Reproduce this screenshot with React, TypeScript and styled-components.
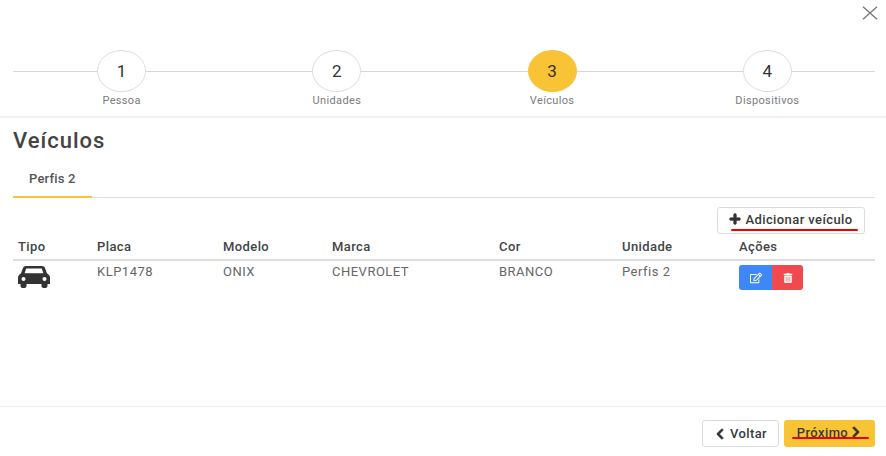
import React from 'react';
import styled, { createGlobalStyle } from 'styled-components';
import { FaChevronLeft, FaChevronRight, FaPlus, FaRegEdit, FaTrashAlt } from 'react-icons/fa';

const GlobalStyle = createGlobalStyle`
    html, body {
        margin: 0;
        padding: 0;
        background: #fff;
    }
    * {
        box-sizing: border-box;
    }
    body {
        font-family: Roboto, "Liberation Sans", sans-serif;
        color: #444;
    }
`;

const steps = [
    { n: 1, label: 'Pessoa' },
    { n: 2, label: 'Unidades' },
    { n: 3, label: 'Veículos', active: true },
    { n: 4, label: 'Dispositivos' },
];

const columns = ['Tipo', 'Placa', 'Modelo', 'Marca', 'Cor', 'Unidade', 'Ações'];

const carPath =
    'M8 0H24C25.5 0 26.5 .8 27 2L29 7.5C31 8.5 32 10 32 12V18H29.5V20C29.5 21.2 28.5 22 27.5 22H25.5C24.5 22 23.5 21.2 23.5 20V18H8.5V20C8.5 21.2 7.5 22 6.5 22H4.5C3.5 22 2.5 21.2 2.5 20V18H0V12C0 10 1 8.5 3 7.5L5 2C5.5 .8 6.5 0 8 0Z' +
    'M8.2 2.6L6.6 7.2H25.4L23.8 2.6Z' +
    'M5.5 11A2 2 0 1 0 5.5 15A2 2 0 1 0 5.5 11Z' +
    'M26.5 11A2 2 0 1 0 26.5 15A2 2 0 1 0 26.5 11Z';

export default function App() {
    return (
        <>
            <GlobalStyle />
            <Modal>
                <TopBar>
                    <CloseButton aria-label="Fechar">
                        <svg width="16" height="14" viewBox="0 0 16 14" fill="none" stroke="#777" strokeWidth="1.3">
                            <path d="M1 0.8 L15 13.2 M15 0.8 L1 13.2" />
                        </svg>
                    </CloseButton>
                </TopBar>
                <Stepper>
                    {steps.map((s) => (
                        <Step key={s.n}>
                            <Circle $active={s.active}>{s.n}</Circle>
                            <StepLabel>{s.label}</StepLabel>
                        </Step>
                    ))}
                </Stepper>
                <Content>
                    <Title>Veículos</Title>
                    <Tabs>
                        <Tab>Perfis 2</Tab>
                    </Tabs>
                    <Actions>
                        <OutlineButton>
                            <PlusIcon />
                            Adicionar veículo
                            <AddMark />
                        </OutlineButton>
                    </Actions>
                    <HeaderRow>
                        {columns.map((c) => (
                            <HeaderCell key={c}>{c}</HeaderCell>
                        ))}
                    </HeaderRow>
                    <Row>
                        <CarCell>
                            <svg width="32" height="22" viewBox="0 0 32 22" fill="#333">
                                <path fillRule="evenodd" d={carPath} />
                            </svg>
                        </CarCell>
                        <Cell>KLP1478</Cell>
                        <Cell>ONIX</Cell>
                        <Cell>CHEVROLET</Cell>
                        <Cell>BRANCO</Cell>
                        <Cell>Perfis 2</Cell>
                        <ActionCell>
                            <ButtonGroup>
                                <EditButton aria-label="Editar">
                                    <FaRegEdit size={12} />
                                </EditButton>
                                <DeleteButton aria-label="Excluir">
                                    <FaTrashAlt size={10} />
                                </DeleteButton>
                            </ButtonGroup>
                        </ActionCell>
                    </Row>
                </Content>
                <Footer>
                    <BackButton>
                        <Chevron as={FaChevronLeft} />
                        Voltar
                    </BackButton>
                    <NextButton>
                        Próximo
                        <Chevron as={FaChevronRight} />
                        <NextMark />
                    </NextButton>
                </Footer>
            </Modal>
        </>
    );
}

const Modal = styled.div`
    width: 886px;
    height: 456px;
    background: #fff;
    display: flex;
    flex-direction: column;
    overflow: hidden;
`;

const TopBar = styled.div`
    height: 50px;
    display: flex;
    justify-content: flex-end;
    padding: 6px 8px 0 0;
`;

const CloseButton = styled.div`
    width: 16px;
    height: 14px;
    display: flex;
`;

const Stepper = styled.div`
    position: relative;
    height: 68px;
    padding: 0 11px 0 14px;
    display: flex;
    border-bottom: 2px solid #f1f1f1;

    &::before {
        content: '';
        position: absolute;
        left: 13px;
        right: 11px;
        top: 21px;
        height: 1px;
        background: #d6d6d6;
    }
`;

const Step = styled.div`
    position: relative;
    flex: 1;
    display: flex;
    flex-direction: column;
    align-items: center;
`;

const Circle = styled.div<{ $active?: boolean }>`
    width: 49px;
    height: 42px;
    border-radius: 50%;
    display: flex;
    align-items: center;
    justify-content: center;
    font-size: 17px;
    letter-spacing: 0.3px;
    color: #333;
    background: ${(p) => (p.$active ? '#f9c336' : '#fff')};
    border: 1px solid ${(p) => (p.$active ? '#f9c336' : '#dedede')};
`;

const StepLabel = styled.div`
    margin-top: 1px;
    font-size: 11px;
    line-height: 15px;
    letter-spacing: 0.35px;
    color: #7b7b7b;
`;

const Content = styled.div`
    flex: 1;
    padding: 0 11px 0 13px;
    display: flex;
    flex-direction: column;
`;

const Title = styled.h2`
    margin: 9px 0 0;
    font-size: 22px;
    line-height: 28px;
    font-weight: 500;
    letter-spacing: 1px;
    color: #444;
`;

const Tabs = styled.div`
    margin-top: 11px;
    height: 32px;
    display: flex;
    border-bottom: 1px solid #dcdcdc;
`;

const Tab = styled.div`
    width: 79px;
    height: 32px;
    padding: 4px 0 0 16px;
    font-size: 13px;
    line-height: 18px;
    font-weight: 500;
    letter-spacing: 0.2px;
    color: #555;
    border-bottom: 2px solid #f9c336;
`;

const Actions = styled.div`
    margin-top: 9px;
    padding-right: 10px;
    display: flex;
    justify-content: flex-end;
`;

const BaseButton = styled.div`
    position: relative;
    height: 27px;
    padding-bottom: 3px;
    display: flex;
    align-items: center;
    justify-content: center;
    gap: 4px;
    border-radius: 3px;
    font-size: 13px;
    font-weight: 500;
    letter-spacing: 0.4px;
    color: #3a3a3a;
`;

const OutlineButton = styled(BaseButton)`
    width: 148px;
    background: #fff;
    border: 1px solid #dcdcdc;
`;

const AddMark = styled.span`
    position: absolute;
    left: 13px;
    top: 21px;
    width: 127px;
    height: 2px;
    border-radius: 1px;
    background: #f00000;
`;

const Chevron = styled.svg`
    width: 12px;
    height: 12px;
    color: #333;
    stroke: #333;
    stroke-width: 40;
`;

const PlusIcon = styled(FaPlus)`
    width: 12px;
    height: 12px;
    color: #333;
    stroke: #333;
    stroke-width: 40;
`;

const gridColumns = '79px 126px 109px 167px 123px 117px 141px';

const HeaderRow = styled.div`
    margin-top: 4px;
    height: 23px;
    display: grid;
    grid-template-columns: ${gridColumns};
    border-bottom: 2px solid #dedede;
`;

const HeaderCell = styled.div`
    padding-left: 5px;
    font-size: 13px;
    line-height: 18px;
    font-weight: 500;
    letter-spacing: 0.4px;
    color: #444;
`;

const Row = styled.div`
    display: grid;
    grid-template-columns: ${gridColumns};
`;

const Cell = styled.div`
    padding: 3px 0 0 5px;
    font-size: 13px;
    line-height: 16px;
    letter-spacing: 0.5px;
    color: #666;
`;

const CarCell = styled(Cell)`
    padding-top: 5px;
`;

const ActionCell = styled(Cell)`
    padding-top: 4px;
`;

const ButtonGroup = styled.div`
    display: flex;
    width: 64px;
    height: 25px;
`;

const EditButton = styled.div`
    flex: 0 0 33px;
    display: flex;
    align-items: center;
    justify-content: center;
    color: #fff;
    background: #3f87f5;
    border-radius: 3px 0 0 3px;
`;

const DeleteButton = styled(EditButton)`
    flex: 0 0 31px;
    background: #f04a4f;
    border-radius: 0 3px 3px 0;
`;

const Footer = styled.div`
    height: 50px;
    padding: 13px 11px 0 0;
    display: flex;
    justify-content: flex-end;
    gap: 5px;
    border-top: 1px solid #ececec;
`;

const BackButton = styled(BaseButton)`
    width: 77px;
    background: #fff;
    border: 1px solid #dcdcdc;
    padding-bottom: 0;
`;

const NextButton = styled(BaseButton)`
    width: 91px;
    background: #f9c336;
    gap: 2px;
`;

const NextMark = styled.span`
    position: absolute;
    left: 8px;
    top: 17px;
    width: 77px;
    height: 2px;
    border-radius: 1px;
    background: #f00000;
`;
